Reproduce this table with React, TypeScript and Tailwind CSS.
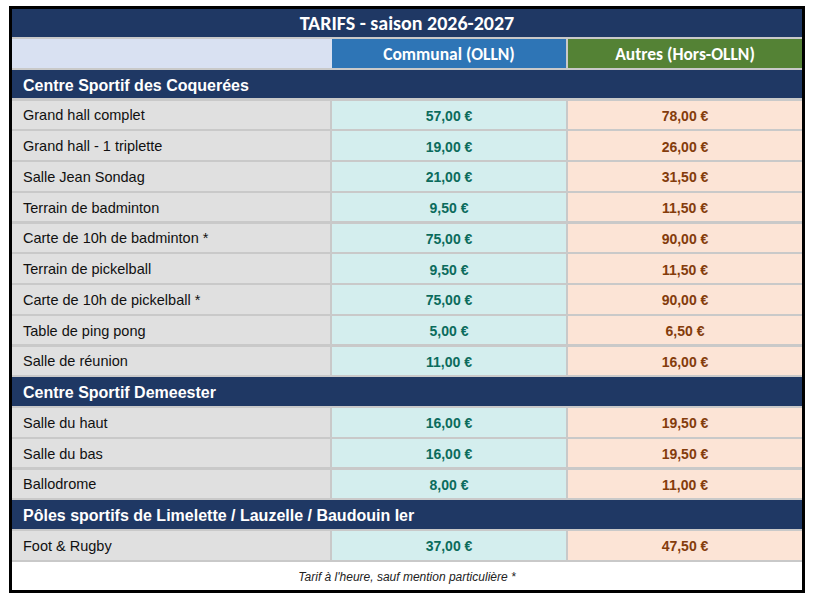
import React from "react";

type Row = { name: string; a: string; b: string };
type Section = { title: string; rows: Row[] };

const sections: Section[] = [
  {
    title: "Centre Sportif des Coquerées",
    rows: [
      { name: "Grand hall complet", a: "57,00 €", b: "78,00 €" },
      { name: "Grand hall - 1 triplette", a: "19,00 €", b: "26,00 €" },
      { name: "Salle Jean Sondag", a: "21,00 €", b: "31,50 €" },
      { name: "Terrain de badminton", a: "9,50 €", b: "11,50 €" },
      { name: "Carte de 10h de badminton *", a: "75,00 €", b: "90,00 €" },
      { name: "Terrain de pickelball", a: "9,50 €", b: "11,50 €" },
      { name: "Carte de 10h de pickelball *", a: "75,00 €", b: "90,00 €" },
      { name: "Table de ping pong", a: "5,00 €", b: "6,50 €" },
      { name: "Salle de réunion", a: "11,00 €", b: "16,00 €" },
    ],
  },
  {
    title: "Centre Sportif Demeester",
    rows: [
      { name: "Salle du haut", a: "16,00 €", b: "19,50 €" },
      { name: "Salle du bas", a: "16,00 €", b: "19,50 €" },
      { name: "Ballodrome", a: "8,00 €", b: "11,00 €" },
    ],
  },
  {
    title: "Pôles sportifs de Limelette / Lauzelle / Baudouin Ier",
    rows: [{ name: "Foot & Rugby", a: "37,00 €", b: "47,50 €" }],
  },
];

const calibri = "font-['Carlito','Calibri','Lato',sans-serif]";
const arial = "font-['Liberation_Sans','Arial',sans-serif]";

export default function App() {
  return (
    <div className="bg-white w-[813px] h-[603px] pt-[6px] pl-[9px]">
      <div className="w-[796px] border-[3px] border-black bg-[#c9c9c9] flex flex-col gap-[2.25px]">
        <div
          className={`h-[27.75px] bg-[#1f3864] text-white flex items-center justify-center font-bold text-[20px] ${calibri}`}
        >
          TARIFS - saison 2026-2027
        </div>
        <div className={`h-[28.5px] flex font-bold text-[17.5px] text-white ${calibri}`}>
          <div className="w-[320px] bg-[#d9e1f2]" />
          <div className="w-[234px] bg-[#2e75b6] flex items-center justify-center pt-[2px]">
            Communal (OLLN)
          </div>
          <div className="w-[2px]" />
          <div className="w-[234px] bg-[#548235] flex items-center justify-center pt-[2px]">
            Autres (Hors-OLLN)
          </div>
        </div>
        {sections.map((s) => (
          <React.Fragment key={s.title}>
            <div
              className={`h-[28.5px] bg-[#1f3864] text-white font-bold text-[16px] flex items-center pl-[11px] pt-[3px] ${arial}`}
            >
              {s.title}
            </div>
            {s.rows.map((r) => (
              <div key={r.name} className={`h-[28.5px] flex gap-[2px] ${arial}`}>
                <div className="w-[318px] bg-[#e0e0e0] text-[#111] text-[14.5px] flex items-center pl-[11px] pt-[3px]">
                  {r.name}
                </div>
                <div className="w-[234px] bg-[#d4eeee] text-[#0b6b5c] font-bold text-[14px] flex items-center justify-center pt-[3px]">
                  {r.a}
                </div>
                <div className="w-[234px] bg-[#fce4d6] text-[#843c0c] font-bold text-[14px] flex items-center justify-center pt-[3px]">
                  {r.b}
                </div>
              </div>
            ))}
          </React.Fragment>
        ))}
        <div
          className={`h-[28.5px] bg-white flex items-center justify-center italic text-[12px] text-[#222] pt-[2px] ${arial}`}
        >
          Tarif à l'heure, sauf mention particulière *
        </div>
      </div>
    </div>
  );
}
